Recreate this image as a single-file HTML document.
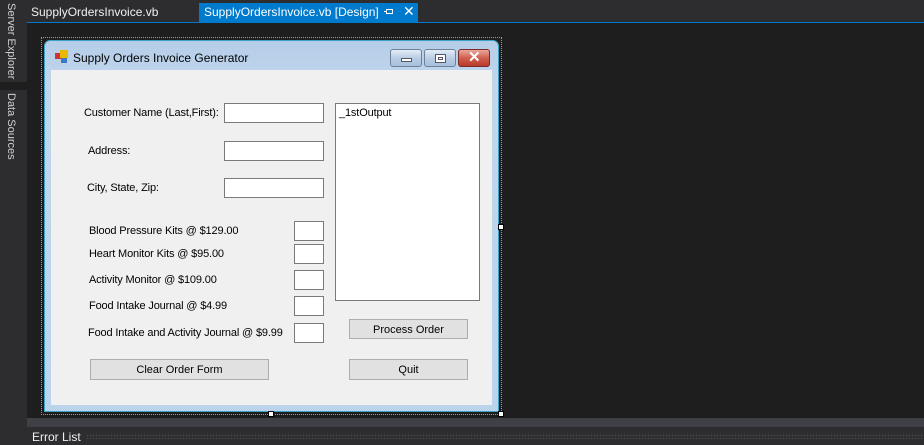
<!DOCTYPE html>
<html><head><style>
*{margin:0;padding:0;box-sizing:border-box}
body{width:924px;height:445px;background:#1e1e1e;position:relative;overflow:hidden;font-family:"Liberation Sans",Arial,sans-serif}
.a{position:absolute}
.lbl{position:absolute;font-size:11px;color:#000;white-space:nowrap;letter-spacing:-0.15px;margin-top:1px}
.tb{position:absolute;background:#fff;border:1px solid #7a7a7a}
.btn{position:absolute;background:#e1e1e1;border:1px solid #adadad;font-size:11px;text-align:center;line-height:20px;color:#000}
.wb{position:absolute;top:49px;height:18px;border:1px solid #6e7f98;border-radius:3px;background:linear-gradient(#e4edf7,#b9cde4 50%,#a8c0dc)}
</style></head><body>
<div class="a" style="left:0;top:0;width:27px;height:445px;background:#2d2d30"></div>
<div class="a" style="left:5px;top:3px;color:#d0d0d0;font-size:11px;writing-mode:vertical-rl;white-space:nowrap">Server Explorer</div>
<div class="a" style="left:0;top:82px;width:27px;height:8px;background:#1e1e1e"></div>
<div class="a" style="left:5px;top:93px;color:#d0d0d0;font-size:11px;writing-mode:vertical-rl;white-space:nowrap">Data Sources</div>
<div class="a" style="left:27px;top:0;width:897px;height:22px;background:#2d2d30"></div>
<div class="a" style="left:31px;top:5px;color:#f1f1f1;font-size:12px">SupplyOrdersInvoice.vb</div>
<div class="a" style="left:199px;top:3px;width:219px;height:20px;background:#007acc"></div>
<div class="a" style="left:204px;top:5px;color:#fff;font-size:12px">SupplyOrdersInvoice.vb [Design]</div>
<div class="a" style="left:386px;top:9px;width:7px;height:5px;border:1px solid #fff"></div>
<div class="a" style="left:384px;top:11px;width:3px;height:1px;background:#fff"></div>
<div class="a" style="left:403px;top:3px;color:#fff;font-size:14px">✕</div>
<div class="a" style="left:27px;top:22px;width:897px;height:1px;background:#007acc"></div>

<div class="a" style="left:41px;top:37px;width:461px;height:378px;border:1px dotted #999"></div>
<div class="a" style="left:44px;top:40px;width:455px;height:372px;background:linear-gradient(#b5cde8,#c1d6ed 40px,#bcd3ec);border:1px solid #3aa2c8;border-radius:6px 6px 0 0"></div>
<div class="a" style="left:55px;top:53px;width:6px;height:6px;background:#c33;"></div>
<div class="a" style="left:60px;top:50px;width:8px;height:8px;background:#e8b800"></div>
<div class="a" style="left:61px;top:58px;width:6px;height:5px;background:#3a78c8"></div>
<div class="a" style="left:73px;top:51px;font-size:12px;color:#000">Supply Orders Invoice Generator</div>
<div class="wb" style="left:390px;width:32px"><div class="a" style="left:10px;top:8px;width:11px;height:4px;background:#fff;border:1px solid #556"></div></div>
<div class="wb" style="left:424px;width:32px"><div class="a" style="left:10px;top:4px;width:11px;height:9px;background:#fff;border:1px solid #556"></div><div class="a" style="left:13px;top:7px;width:5px;height:3px;border:1px solid #556"></div></div>
<div class="wb" style="left:458px;width:32px;border-color:#7a2a2a;background:linear-gradient(#e9a99c,#d06050 50%,#b83a28)"><div class="a" style="left:9px;top:-2px;color:#fff;font-size:15px;font-weight:bold">✕</div></div>
<div class="a" style="left:51px;top:70px;width:441px;height:335px;background:#f0f0f0"></div>

<div class="lbl" style="left:84px;top:106px">Customer Name (Last,First):</div>
<div class="tb" style="left:224px;top:103px;width:100px;height:20px"></div>
<div class="lbl" style="left:88px;top:144px">Address:</div>
<div class="tb" style="left:224px;top:141px;width:100px;height:20px"></div>
<div class="lbl" style="left:87px;top:181px">City, State, Zip:</div>
<div class="tb" style="left:224px;top:178px;width:100px;height:20px"></div>
<div class="lbl" style="left:89px;top:224px">Blood Pressure Kits @ $129.00</div>
<div class="tb" style="left:294px;top:221px;width:30px;height:20px"></div>
<div class="lbl" style="left:89px;top:247px">Heart Monitor Kits @ $95.00</div>
<div class="tb" style="left:294px;top:244px;width:30px;height:20px"></div>
<div class="lbl" style="left:89px;top:273px">Activity Monitor @ $109.00</div>
<div class="tb" style="left:294px;top:270px;width:30px;height:20px"></div>
<div class="lbl" style="left:89px;top:299px">Food Intake Journal @ $4.99</div>
<div class="tb" style="left:294px;top:296px;width:30px;height:20px"></div>
<div class="lbl" style="left:88px;top:326px">Food Intake and Activity Journal @ $9.99</div>
<div class="tb" style="left:294px;top:323px;width:30px;height:20px"></div>
<div class="tb" style="left:335px;top:103px;width:145px;height:198px"><div class="lbl" style="left:3px;top:2px">_1stOutput</div></div>
<div class="btn" style="left:349px;top:319px;width:119px;height:20px">Process Order</div>
<div class="btn" style="left:90px;top:359px;width:179px;height:21px">Clear Order Form</div>
<div class="btn" style="left:349px;top:359px;width:119px;height:21px">Quit</div>
<div class="a" style="left:498px;top:224px;width:6px;height:6px;background:#fff;border:1px solid #000"></div>
<div class="a" style="left:268px;top:411px;width:6px;height:6px;background:#fff;border:1px solid #000"></div>
<div class="a" style="left:498px;top:411px;width:6px;height:6px;background:#fff;border:1px solid #000"></div>

<div class="a" style="left:27px;top:418px;width:897px;height:9px;background:#3f3f46"></div>
<div class="a" style="left:27px;top:427px;width:897px;height:18px;background:#2d2d30"></div>
<div class="a" style="left:32px;top:430px;color:#f1f1f1;font-size:12px">Error List</div>
<div class="a" style="left:86px;top:434px;width:838px;height:5px;background-image:radial-gradient(#46464c 35%,transparent 40%);background-size:3px 3px"></div>
</body></html>
